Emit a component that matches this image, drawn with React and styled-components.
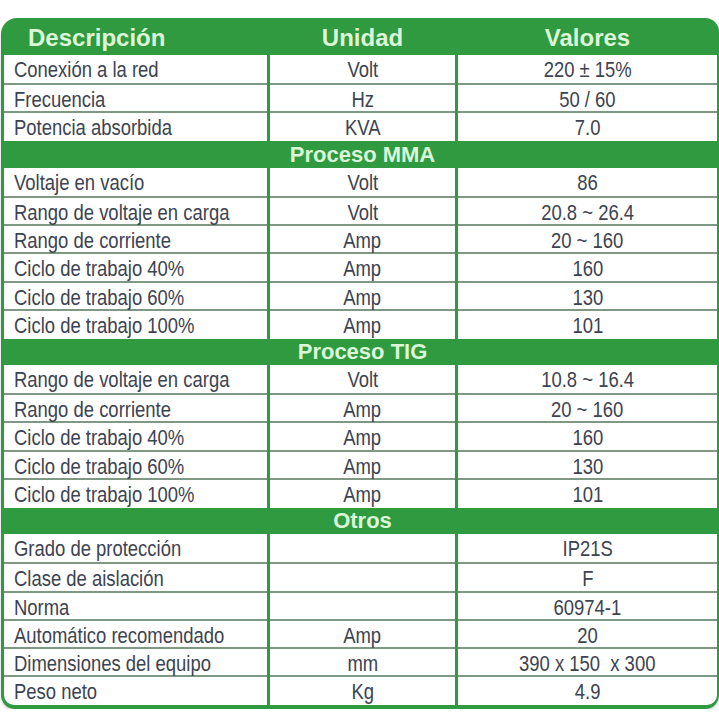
import React from 'react';
import styled, { createGlobalStyle } from 'styled-components';

const GlobalStyle = createGlobalStyle`
  html, body {
    margin: 0;
    padding: 0;
    background: #ffffff;
  }
  body {
    font-family: "Liberation Sans", Arial, sans-serif;
  }
`;

const GREEN = '#2f9a3f';
const COLS = '263px 185px 1fr';

const Table = styled.div`
  margin: 18px 0 0 1px;
  width: 718px;
  box-sizing: border-box;
  background: ${GREEN};
  border-radius: 16px 14px 14px 14px;
  padding: 0 2px 6px 3px;
  box-shadow: 0 2px 3px rgba(0, 0, 0, 0.18);
`;

const HeaderRow = styled.div`
  display: grid;
  grid-template-columns: ${COLS};
  column-gap: 3px;
  height: 37px;
  align-items: center;
  font-weight: 700;
  font-size: 24px;
  color: #dcf6d8;
`;

const HeaderCell = styled.div`
  text-align: ${props => (props.left ? 'left' : 'center')};
  padding-left: ${props => (props.left ? '24px' : '0')};
  padding-top: 3px;
`;

const SectionRow = styled.div`
  display: grid;
  grid-template-columns: ${COLS};
  column-gap: 3px;
  height: 28.2px;
  align-items: center;
  font-weight: 700;
  font-size: 22px;
  color: #dcf6d8;
`;

const SectionLabel = styled.div`
  grid-column: 2;
  display: flex;
  justify-content: center;
  white-space: nowrap;
  padding-top: 2px;
`;

const DataRow = styled.div`
  display: grid;
  grid-template-columns: ${COLS};
  column-gap: 3px;
  height: 28.2px;
`;

const Cell = styled.div`
  background: #ffffff;
  box-sizing: border-box;
  border-top: ${props => (props.first ? 'none' : '2px solid #7f9883')};
  display: flex;
  align-items: center;
  justify-content: ${props => (props.left ? 'flex-start' : 'center')};
  padding-left: ${props => (props.left ? '10px' : '0')};
  padding-top: 2px;
  font-size: 22.5px;
  color: #3c4351;
  white-space: pre;
  border-bottom-left-radius: ${props => (props.roundLeft ? '10px' : '0')};
  border-bottom-right-radius: ${props => (props.roundRight ? '10px' : '0')};
`;

// condensed look of the printed sheet
const Narrow = styled.span`
  display: inline-block;
  transform: scaleX(0.82);
  transform-origin: ${props => (props.left ? 'left center' : 'center center')};
`;

const groups = [
  {
    title: null,
    rows: [
      ['Conexión a la red', 'Volt', '220 ± 15%'],
      ['Frecuencia', 'Hz', '50 / 60'],
      ['Potencia absorbida', 'KVA', '7.0'],
    ],
  },
  {
    title: 'Proceso MMA',
    rows: [
      ['Voltaje en vacío', 'Volt', '86'],
      ['Rango de voltaje en carga', 'Volt', '20.8 ~ 26.4'],
      ['Rango de corriente', 'Amp', '20 ~ 160'],
      ['Ciclo de trabajo 40%', 'Amp', '160'],
      ['Ciclo de trabajo 60%', 'Amp', '130'],
      ['Ciclo de trabajo 100%', 'Amp', '101'],
    ],
  },
  {
    title: 'Proceso TIG',
    rows: [
      ['Rango de voltaje en carga', 'Volt', '10.8 ~ 16.4'],
      ['Rango de corriente', 'Amp', '20 ~ 160'],
      ['Ciclo de trabajo 40%', 'Amp', '160'],
      ['Ciclo de trabajo 60%', 'Amp', '130'],
      ['Ciclo de trabajo 100%', 'Amp', '101'],
    ],
  },
  {
    title: 'Otros',
    rows: [
      ['Grado de protección', '', 'IP21S'],
      ['Clase de aislación', '', 'F'],
      ['Norma', '', '60974-1'],
      ['Automático recomendado', 'Amp', '20'],
      ['Dimensiones del equipo', 'mm', '390 x 150  x 300'],
      ['Peso neto', 'Kg', '4.9'],
    ],
  },
];

export default function App() {
  return (
    <>
      <GlobalStyle />
      <Table>
        <HeaderRow>
          <HeaderCell left>Descripción</HeaderCell>
          <HeaderCell>Unidad</HeaderCell>
          <HeaderCell>Valores</HeaderCell>
        </HeaderRow>
        {groups.map((g, gi) => (
          <React.Fragment key={gi}>
            {g.title && (
              <SectionRow>
                <SectionLabel>{g.title}</SectionLabel>
              </SectionRow>
            )}
            {g.rows.map((r, ri) => {
              const first = ri === 0;
              const last = gi === groups.length - 1 && ri === g.rows.length - 1;
              return (
                <DataRow key={ri}>
                  <Cell left first={first} roundLeft={last}>
                    <Narrow left>{r[0]}</Narrow>
                  </Cell>
                  <Cell first={first}>
                    <Narrow>{r[1]}</Narrow>
                  </Cell>
                  <Cell first={first} roundRight={last}>
                    <Narrow>{r[2]}</Narrow>
                  </Cell>
                </DataRow>
              );
            })}
          </React.Fragment>
        ))}
      </Table>
    </>
  );
}
